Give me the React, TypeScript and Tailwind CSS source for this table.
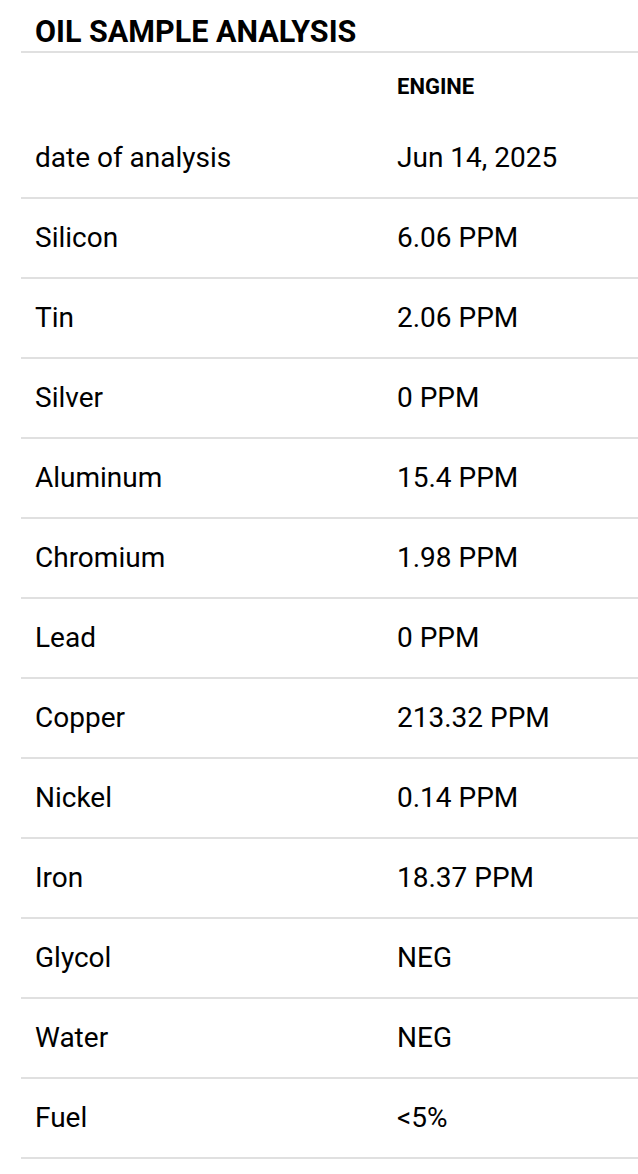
const rows = [
  { label: "date of analysis", value: "Jun 14, 2025" },
  { label: "Silicon", value: "6.06 PPM" },
  { label: "Tin", value: "2.06 PPM" },
  { label: "Silver", value: "0 PPM" },
  { label: "Aluminum", value: "15.4 PPM" },
  { label: "Chromium", value: "1.98 PPM" },
  { label: "Lead", value: "0 PPM" },
  { label: "Copper", value: "213.32 PPM" },
  { label: "Nickel", value: "0.14 PPM" },
  { label: "Iron", value: "18.37 PPM" },
  { label: "Glycol", value: "NEG" },
  { label: "Water", value: "NEG" },
  { label: "Fuel", value: "<5%" },
];

export default function App() {
  return (
    <div className="w-[638px] min-h-[1174px] bg-white pl-[21px] text-black font-['Roboto',sans-serif]">
      <h2 className="pl-[14px] pt-[14px] pb-[1px] text-[30.5px] leading-[36px] font-bold border-b-2 border-[#e0e0e0]">
        OIL SAMPLE ANALYSIS
      </h2>
      {/* column header */}
      <div className="grid grid-cols-[362px_1fr] h-[66px] items-center">
        <div />
        <div className="pl-[14px] text-[22px] font-bold">ENGINE</div>
      </div>
      {rows.map((row) => (
        <div
          key={row.label}
          className="grid grid-cols-[362px_1fr] h-[80px] items-center border-b-2 border-[#e0e0e0] text-[28px]"
        >
          <div className="pl-[14px]">{row.label}</div>
          <div className="pl-[14px]">{row.value}</div>
        </div>
      ))}
    </div>
  );
}
